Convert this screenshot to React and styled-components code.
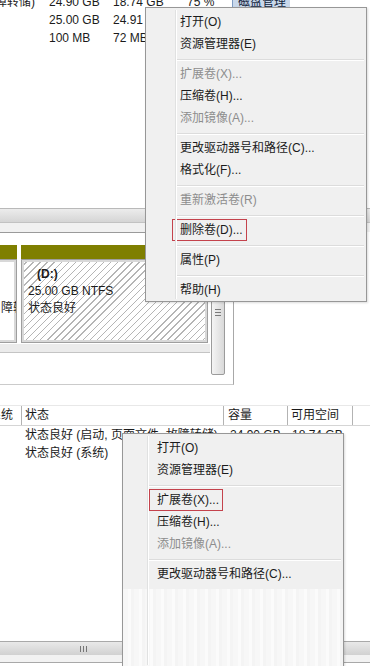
import React from 'react';
import styled, { createGlobalStyle } from 'styled-components';

const UI_FONT = '"Liberation Sans", "Noto Sans CJK SC", sans-serif';

const GlobalStyle = createGlobalStyle`
  html, body {
    margin: 0;
    padding: 0;
    background: #fff;
  }
  body {
    font-family: ${UI_FONT};
    font-size: 12px;
    color: #1b1b1b;
  }
`;

const Page = styled.div`
  width: 370px;
  height: 666px;
  display: flex;
  flex-direction: column;
  overflow: hidden;
  background: #fff;
`;

const Shot = styled.section`
  position: relative;
  height: ${(p) => p.$h}px;
  padding-top: ${(p) => p.$padTop || 0}px;
  box-sizing: border-box;
  display: flex;
  flex-direction: column;
  overflow: hidden;
  flex-shrink: 0;
`;

/* ---------- top: volume list (scrolled) ---------- */

const VolumeList = styled.div`
  height: 208px;
  overflow: hidden;
  flex-shrink: 0;
`;

const VolumeRows = styled.div`
  margin-top: -7px;
`;

const VolumeRow = styled.div`
  display: grid;
  grid-template-columns: 44px 64px 74px 48px 60px;
  height: 18px;
  line-height: 18px;
  white-space: nowrap;
`;

const Cell = styled.div`
  padding-left: ${(p) => p.$pad ?? 5}px;
  overflow: hidden;
  white-space: nowrap;
`;

const ClipCell = styled.div`
  display: flex;
  justify-content: flex-end;
  overflow: hidden;
  white-space: nowrap;
  padding-right: ${(p) => p.$pad}px;

  > span {
    flex-shrink: 0;
  }
`;

const TabTag = styled.div`
  margin-left: 2px;
  padding-left: 5px;
  background: #c9d8eb;
  border-left: 1px solid #7f9cc3;
  color: #13253d;
  overflow: hidden;
`;

const TopScroll = styled.div`
  height: 24px;
  flex-shrink: 0;
  display: flex;
  flex-direction: column;
`;

const ScrollTrack = styled.div`
  height: 15px;
  box-sizing: border-box;
  border-top: 1px solid #b9b9b9;
  border-bottom: 1px solid #c2c2c2;
  background: linear-gradient(#ececec, #d5d5d5);
  flex-shrink: 0;
`;

const ScrollStrip = styled.div`
  flex: 1;
  background: #f1f1f1;
`;

/* ---------- top: disk graph ---------- */

const DiskPanel = styled.div`
  width: 234px;
  height: 153px;
  box-sizing: border-box;
  border-top: 1px solid #9a9a9a;
  border-right: 1px solid #a8a8a8;
  border-bottom: 1px solid #cbcbcb;
  display: flex;
  flex-shrink: 0;
`;

const DiskArea = styled.div`
  width: 210px;
  padding-top: 12px;
  display: flex;
  flex-direction: column;
`;

const PartitionRow = styled.div`
  display: flex;
  gap: 4px;
`;

const Partition = styled.div`
  width: ${(p) => p.$w}px;
  margin-left: ${(p) => p.$offset || 0}px;
  display: flex;
  flex-direction: column;
  flex-shrink: 0;
`;

const Cap = styled.div`
  height: 14px;
  background: #7f7f00;
`;

const PartBody = styled.div`
  height: 84px;
  box-sizing: border-box;
  border: 1px solid #9e9e9e;
  box-shadow: inset 0 0 0 2px #d8d8d8;
  padding: 6px 0 0 ${(p) => p.$padLeft}px;
  overflow: hidden;
  white-space: nowrap;
  line-height: 17px;
  color: #1b1b1b;
  background: ${(p) =>
    p.$hatched
      ? 'repeating-linear-gradient(135deg, #ffffff 0 4px, #b5b5b5 4px 5px)'
      : '#ffffff'};
`;

const PartLine = styled.div`
  height: 17px;
  padding-left: ${(p) => p.$indent || 0}px;
  font-weight: ${(p) => (p.$bold ? 700 : 400)};
`;

const DiskRowGap = styled.div`
  height: 8px;
  margin-top: 1px;
  background: #ebebeb;
  border-bottom: 1px solid #c4c4c4;
`;

const VScroll = styled.div`
  width: 14px;
  height: 142px;
  margin-left: 1px;
  box-sizing: border-box;
  border: 1px solid #9b9b9b;
  border-radius: 2px;
  background: linear-gradient(90deg, #f4f4f4, #d9d9d9);
  display: flex;
  justify-content: center;
  padding-top: 75px;
`;

const HGrip = styled.span`
  width: 6px;
  height: 7px;
  background: repeating-linear-gradient(#7a7a7a 0 1px, transparent 1px 3px);
`;

/* ---------- context menu ---------- */

const Menu = styled.ul`
  position: absolute;
  top: ${(p) => p.$top}px;
  left: ${(p) => p.$left}px;
  width: ${(p) => p.$w}px;
  ${(p) => (p.$toBottom ? 'bottom: -2px;' : '')}
  margin: 0;
  padding: 3px 2px 0;
  list-style: none;
  box-sizing: border-box;
  background: #f0f0f0;
  border: 1px solid #979797;
  box-shadow: 1px 1px 2px rgba(0, 0, 0, 0.14);
  display: flex;
  flex-direction: column;
  z-index: 5;

  &::before {
    content: '';
    position: absolute;
    top: 2px;
    bottom: 2px;
    left: ${(p) => p.$gutter - 1}px;
    width: 1px;
    background: #e0e1e1;
    box-shadow: 1px 0 0 #ffffff;
  }
`;

const MenuItem = styled.li`
  height: 22px;
  line-height: 22px;
  padding-left: 32px;
  white-space: nowrap;
  color: ${(p) => (p.$disabled ? '#8d8d8d' : '#1b1b1b')};
  flex-shrink: 0;
`;

const Marked = styled.span`
  display: inline-block;
  vertical-align: top;
  line-height: 20px;
  margin-left: -8px;
  padding: 0 3px 0 7px;
  border: 1px solid #c4424c;
`;

const MenuSep = styled.li`
  height: 8px;
  display: flex;
  align-items: center;
  padding-left: ${(p) => p.$gutter - 3}px;
  flex-shrink: 0;

  &::after {
    content: '';
    flex: 1;
    height: 1px;
    background: #dcdcdc;
    box-shadow: 0 1px 0 #ffffff;
  }
`;

const MenuFade = styled.li`
  flex: 1;
  margin: 4px -2px 0;
  background: repeating-linear-gradient(
    90deg,
    #f7f7f7 0 5px,
    #fbfbfb 5px 8px,
    #f4f4f4 8px 11px
  );
`;

/* ---------- bottom: list view ---------- */

const ListHeader = styled.div`
  display: grid;
  grid-template-columns: 21px 202px 64px 65px 1fr;
  height: 21px;
  box-sizing: border-box;
  border-top: 1px solid #e8e8e8;
  border-bottom: 1px solid #d5d5d5;
  line-height: 19px;
  flex-shrink: 0;
`;

const HeadCell = styled.div`
  padding-left: ${(p) => p.$pad ?? 3}px;
  border-left: 1px solid #b3b3b3;
  overflow: hidden;
  white-space: nowrap;
`;

const ListBody = styled.div`
  flex: 1;
  overflow: hidden;
`;

const ListRow = styled.div`
  display: grid;
  grid-template-columns: 21px 202px 64px 65px 1fr;
  height: 18px;
  line-height: 18px;
  white-space: nowrap;
`;

const BottomScroll = styled.div`
  height: 14px;
  box-sizing: border-box;
  border-top: 1px solid #a9a9a9;
  background: linear-gradient(#e9e9e9, #d1d1d1);
  display: flex;
  align-items: center;
  padding-left: 80px;
  flex-shrink: 0;
`;

const VGrip = styled.span`
  width: 7px;
  height: 6px;
  background: repeating-linear-gradient(90deg, #767676 0 1px, transparent 1px 3px);
`;

const BottomStrip = styled.div`
  height: 7px;
  background: #f2f2f2;
  border-bottom: 1px solid #a8a8a8;
  flex-shrink: 0;
`;

const BottomFill = styled.div`
  height: 3px;
  flex-shrink: 0;
`;

const topMenu = [
  { label: '打开(O)' },
  { label: '资源管理器(E)' },
  '-',
  { label: '扩展卷(X)...', disabled: true },
  { label: '压缩卷(H)...' },
  { label: '添加镜像(A)...', disabled: true },
  '-',
  { label: '更改驱动器号和路径(C)...' },
  { label: '格式化(F)...' },
  '-',
  { label: '重新激活卷(R)', disabled: true },
  '-',
  { label: '删除卷(D)...', marked: true },
  '-',
  { label: '属性(P)' },
  '-',
  { label: '帮助(H)' },
];

const bottomMenu = [
  { label: '打开(O)' },
  { label: '资源管理器(E)' },
  '-',
  { label: '扩展卷(X)...', marked: true },
  { label: '压缩卷(H)...' },
  { label: '添加镜像(A)...', disabled: true },
  '-',
  { label: '更改驱动器号和路径(C)...' },
];

function ContextMenu({ items, top, left, width, gutter, toBottom }) {
  return (
    <Menu $top={top} $left={left} $w={width} $gutter={gutter} $toBottom={toBottom}>
      {items.map((it, i) =>
        it === '-' ? (
          <MenuSep key={i} $gutter={gutter} />
        ) : (
          <MenuItem key={i} $disabled={it.disabled}>
            {it.marked ? <Marked>{it.label}</Marked> : it.label}
          </MenuItem>
        ),
      )}
      {toBottom && <MenuFade />}
    </Menu>
  );
}

export default function App() {
  return (
    <Page>
      <GlobalStyle />

      <Shot $h={390}>
        <VolumeList>
          <VolumeRows>
            <VolumeRow>
              <ClipCell $pad={9}>
                <span>状态良好 (启动, 页面文件, 故障转储)</span>
              </ClipCell>
              <Cell>24.90 GB</Cell>
              <Cell>18.74 GB</Cell>
              <Cell>75 %</Cell>
              <TabTag>磁盘管理</TabTag>
            </VolumeRow>
            <VolumeRow>
              <ClipCell $pad={9} />
              <Cell>25.00 GB</Cell>
              <Cell>24.91</Cell>
            </VolumeRow>
            <VolumeRow>
              <ClipCell $pad={9} />
              <Cell>100 MB</Cell>
              <Cell>72 MB</Cell>
            </VolumeRow>
          </VolumeRows>
        </VolumeList>

        <TopScroll>
          <ScrollTrack />
          <ScrollStrip />
        </TopScroll>

        <DiskPanel>
          <DiskArea>
            <PartitionRow>
              <Partition $w={27} $offset={-10}>
                <Cap />
                <PartBody $padLeft={10}>
                  <PartLine />
                  <PartLine />
                  <PartLine>障转</PartLine>
                </PartBody>
              </Partition>
              <Partition $w={187}>
                <Cap />
                <PartBody $hatched $padLeft={6}>
                  <PartLine $bold $indent={9}>(D:)</PartLine>
                  <PartLine>25.00 GB NTFS</PartLine>
                  <PartLine>状态良好</PartLine>
                </PartBody>
              </Partition>
            </PartitionRow>
            <DiskRowGap />
          </DiskArea>
          <VScroll>
            <HGrip />
          </VScroll>
        </DiskPanel>

        <ContextMenu items={topMenu} top={7} left={145} width={222} gutter={30} />
      </Shot>

      <Shot $h={276} $padTop={15}>
        <ListHeader>
          <ClipCell $pad={8}>
            <span>系统</span>
          </ClipCell>
          <HeadCell>状态</HeadCell>
          <HeadCell $pad={4}>容量</HeadCell>
          <HeadCell>可用空间</HeadCell>
          <HeadCell />
        </ListHeader>

        <ListBody>
          <ListRow>
            <Cell />
            <Cell $pad={4}>状态良好 (启动, 页面文件, 故障转储)</Cell>
            <Cell $pad={7}>24.90 GB</Cell>
            <Cell $pad={5}>18.74 GB</Cell>
            <Cell />
          </ListRow>
          <ListRow>
            <Cell />
            <Cell $pad={4}>状态良好 (系统)</Cell>
          </ListRow>
        </ListBody>

        <BottomScroll>
          <VGrip />
        </BottomScroll>
        <BottomStrip />
        <BottomFill />

        <ContextMenu items={bottomMenu} top={43} left={122} width={222} gutter={25} toBottom />
      </Shot>
    </Page>
  );
}
